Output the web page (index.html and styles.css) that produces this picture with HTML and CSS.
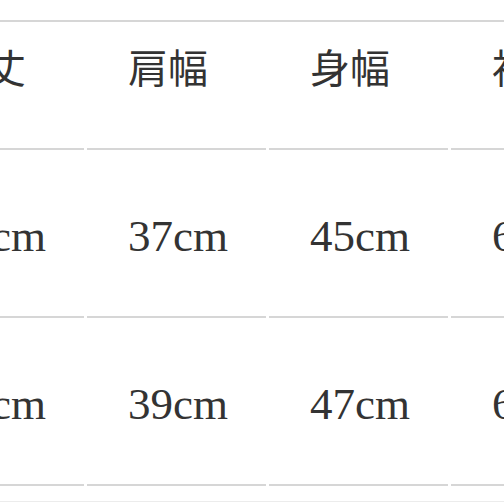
FILE: index.html
```html
<!DOCTYPE html>
<html lang="ja">
<head>
<meta charset="utf-8">
<link rel="stylesheet" href="styles.css">
</head>
<body>
<div class="page">
  <div class="size-table">
    <div class="cell head">着丈</div>
    <div class="cell head">肩幅</div>
    <div class="cell head">身幅</div>
    <div class="cell head">袖丈</div>

    <div class="cell num">66cm</div>
    <div class="cell num">37cm</div>
    <div class="cell num">45cm</div>
    <div class="cell num">60cm</div>

    <div class="cell num">68cm</div>
    <div class="cell num">39cm</div>
    <div class="cell num">47cm</div>
    <div class="cell num">61cm</div>
  </div>
  <div class="foot-line"></div>
</div>
</body>
</html>
```
FILE: styles.css
```css
html, body {
  margin: 0;
  padding: 0;
  background: #ffffff;
}
body {
  width: 504px;
  height: 504px;
  overflow: hidden;
}
.page {
  padding-top: 20px;
  width: 504px;
  overflow: hidden;
}
.size-table {
  margin-left: -95px;
  width: 737px;
  display: grid;
  grid-template-columns: repeat(4, 179px);
  column-gap: 3px;
  border-top: 2px solid #d6d6d6;
  color: #333333;
}
.cell {
  padding-left: 41px;
  border-bottom: 2px solid #d6d6d6;
  white-space: nowrap;
}
.head {
  font-family: "Noto Sans CJK JP", "Noto Sans", sans-serif;
  font-size: 40px;
  line-height: 40px;
  height: 40px;
  padding-top: 24px;
  padding-bottom: 62px;
}
.num {
  font-family: "Liberation Serif", serif;
  font-size: 45px;
  line-height: 50px;
  height: 50px;
  padding-top: 61px;
  padding-bottom: 55px;
}
.foot-line {
  margin-top: 15px;
  border-top: 1px solid #ececec;
}
```
